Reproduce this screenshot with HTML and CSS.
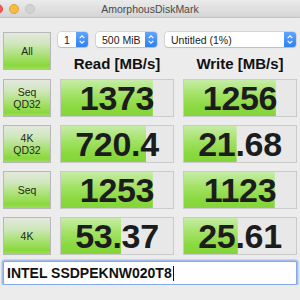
FILE: index.html
```html
<!DOCTYPE html>
<html>
<head>
    <title>AmorphousDiskMark</title>
    <link rel="stylesheet" href="styles.css">
</head>
<body>
    <div class="titlebar">
        <div class="lights">
            <span class="light red"></span>
            <span class="light yellow"></span>
            <span class="light gray"></span>
        </div>
        <div class="title">AmorphousDiskMark</div>
        <div></div>
    </div>

    <div class="panel">
        <div class="grid">
            <div class="btn">All</div>
            <div class="top">
                <div class="selects">
                    <div class="popup count"><span>1</span><i class="stepper"><svg width="12" height="15" viewBox="0 0 12 15"><path d="M3.7 6.2 L6 3.9 L8.3 6.2 M3.7 8.8 L6 11.1 L8.3 8.8" fill="none" stroke="#fff" stroke-width="1.2"/></svg></i></div>
                    <div class="popup size"><span>500 MiB</span><i class="stepper"><svg width="12" height="15" viewBox="0 0 12 15"><path d="M3.7 6.2 L6 3.9 L8.3 6.2 M3.7 8.8 L6 11.1 L8.3 8.8" fill="none" stroke="#fff" stroke-width="1.2"/></svg></i></div>
                    <div class="popup volume"><span>Untitled (1%)</span><i class="stepper"><svg width="12" height="15" viewBox="0 0 12 15"><path d="M3.7 6.2 L6 3.9 L8.3 6.2 M3.7 8.8 L6 11.1 L8.3 8.8" fill="none" stroke="#fff" stroke-width="1.2"/></svg></i></div>
                </div>
                <div class="heads">
                    <div>Read [MB/s]</div>
                    <div>Write [MB/s]</div>
                </div>
            </div>

            <div class="btn">Seq<br>QD32</div>
            <div class="value" style="background-size: 82% 100%">1373</div>
            <div class="value" style="background-size: 82% 100%">1256</div>

            <div class="btn">4K<br>QD32</div>
            <div class="value" style="background-size: 76% 100%">720.4</div>
            <div class="value" style="background-size: 47% 100%">21.68</div>

            <div class="btn">Seq</div>
            <div class="value" style="background-size: 82% 100%">1253</div>
            <div class="value" style="background-size: 81% 100%">1123</div>

            <div class="btn">4K</div>
            <div class="value" style="background-size: 54% 100%">53.37</div>
            <div class="value" style="background-size: 48% 100%">25.61</div>
        </div>

        <div class="drive">INTEL SSDPEKNW020T8<span class="caret"></span></div>
    </div>
</body>
</html>
```

FILE: styles.css
```css
body {
    font-family: "Liberation Sans", Arial, sans-serif;
    background-color: #ececec;
    margin: 0;
    padding: 0;
    color: #1b1b1b;
    overflow: hidden;
}

.titlebar {
    height: 17px;
    display: grid;
    grid-template-columns: 1fr auto 1fr;
    align-items: center;
    background: linear-gradient(#ebebeb, #d5d5d5);
    border-bottom: 1px solid #c4c4c4;
}

.lights {
    display: flex;
    gap: 6px;
    margin-left: -7px;
}

.light {
    width: 10px;
    height: 10px;
    border-radius: 50%;
    box-sizing: border-box;
}

.red {
    background: #f25c55;
    border: 1px solid #de4a43;
}

.yellow {
    background: #f6bd42;
    border: 1px solid #dea431;
}

.gray {
    background: #d2d2d2;
    border: 1px solid #c2c2c2;
}

.title {
    font-size: 10.5px;
    color: #4a4a4a;
}

.panel {
    padding: 14px 3px 0 3px;
}

.grid {
    display: grid;
    grid-template-columns: 48px 114px 114px;
    grid-template-rows: 39px repeat(4, 38px);
    column-gap: 9px;
    row-gap: 8px;
}

.btn {
    height: 38px;
    box-sizing: border-box;
    border: 1px solid #b7b7b7;
    background: linear-gradient(#e3e8df 0%, #cfe7bb 30%, #a6e06e 65%, #8bd83c 90%, #9cde5c 100%);
    display: flex;
    align-items: center;
    justify-content: center;
    text-align: center;
    font-size: 10.5px;
    line-height: 12px;
    color: #1f2a17;
}

.top {
    grid-column: 2 / 4;
    display: flex;
    flex-direction: column;
    justify-content: space-between;
}

.selects {
    display: flex;
    gap: 8px;
    margin-left: -2px;
}

.popup {
    height: 15px;
    display: flex;
    align-items: center;
    justify-content: space-between;
    background: #fff;
    border-radius: 3px;
    box-shadow: 0 0 0 0.5px rgba(0, 0, 0, 0.18), 0 1px 1px rgba(0, 0, 0, 0.12);
    font-size: 10.5px;
    color: #1b1b1b;
}

.popup span {
    padding-left: 6px;
}

.count {
    width: 30px;
}

.size {
    width: 61px;
}

.volume {
    width: 131px;
}

.stepper {
    width: 12px;
    height: 15px;
    border-radius: 0 3px 3px 0;
    background: linear-gradient(#62a6fa, #2f80f2);
    display: flex;
}

.heads {
    display: grid;
    grid-template-columns: 114px 114px;
    column-gap: 9px;
    font-size: 15px;
    font-weight: bold;
    line-height: 15px;
    text-align: center;
    color: #111;
}

.value {
    box-sizing: border-box;
    border: 1px solid #cacaca;
    background-color: #e8e8e8;
    background-image: linear-gradient(#c6eca6 0%, #a3e266 40%, #8ad940 75%, #84d43a 100%);
    background-repeat: no-repeat;
    display: flex;
    align-items: center;
    justify-content: center;
    font-size: 34px;
    font-weight: bold;
    color: #1c1c1c;
    letter-spacing: -0.3px;
}

.drive {
    margin-top: 6px;
    height: 24px;
    box-sizing: border-box;
    background: #fff;
    border: 1px solid #83aae6;
    border-radius: 2px;
    box-shadow: 0 0 0 1.5px rgba(125, 168, 232, 0.65);
    display: flex;
    align-items: center;
    padding-left: 3px;
    font-size: 14px;
    font-weight: bold;
    color: #111;
}

.caret {
    width: 1px;
    height: 15px;
    background: #111;
    margin-left: 1px;
}
```
